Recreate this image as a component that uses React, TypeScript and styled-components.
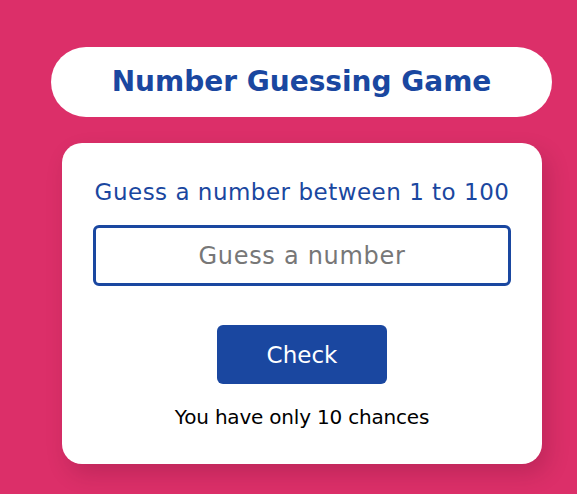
import React from "react";
import styled, { createGlobalStyle } from "styled-components";

const Global = createGlobalStyle`
  html, body { margin: 0; padding: 0; }
  body {
    background: #dc2f69;
    font-family: "DejaVu Sans", "Liberation Sans", sans-serif;
    width: 577px;
    height: 494px;
    overflow: hidden;
  }
`;

const Page = styled.div`
  display: flex;
  flex-direction: column;
  align-items: flex-start;
  padding: 47px 0 0 51px;
`;

const Header = styled.div`
  width: 501px;
  height: 70px;
  background: #fff;
  border-radius: 35px;
  display: flex;
  align-items: center;
  justify-content: center;
`;

const Title = styled.h1`
  margin: 0;
  font-size: 28px;
  font-weight: 700;
  color: #1a47a0;
  line-height: 34px;
`;

const Card = styled.div`
  margin: 26px 0 0 11px;
  width: 480px;
  height: 321px;
  box-sizing: border-box;
  background: #fff;
  border-radius: 20px;
  box-shadow: 6px 10px 22px rgba(60, 0, 30, 0.18);
  display: flex;
  flex-direction: column;
  align-items: center;
  padding-top: 33px;
`;

const Prompt = styled.p`
  margin: 0;
  font-size: 23px;
  letter-spacing: 0.5px;
  color: #1a47a0;
  line-height: 32px;
`;

const Input = styled.input`
  margin-top: 17px;
  width: 418px;
  height: 61px;
  box-sizing: border-box;
  padding: 0;
  border: 3px solid #1a47a0;
  border-radius: 6px;
  text-align: center;
  font-family: inherit;
  font-size: 24px;
  letter-spacing: 0.7px;
  color: #222;
  outline: none;
  -moz-appearance: textfield;
  &::placeholder { color: #777; }
  &::-webkit-inner-spin-button,
  &::-webkit-outer-spin-button {
    -webkit-appearance: none;
    margin: 0;
  }
`;

const Button = styled.button`
  margin-top: 39px;
  width: 170px;
  height: 59px;
  border: none;
  border-radius: 6px;
  background: #1a47a0;
  color: #fff;
  font-family: inherit;
  font-size: 23px;
  cursor: pointer;
`;

const Chances = styled.p`
  margin: 21px 0 0;
  font-size: 20px;
  letter-spacing: -0.2px;
  line-height: 24px;
  color: #000;
`;

export default function App() {
  return (
    <>
      <Global />
      <Page>
        <Header>
          <Title>Number Guessing Game</Title>
        </Header>
        <Card>
          <Prompt>Guess a number between 1 to 100</Prompt>
          <Input type="number" placeholder="Guess a number" />
          <Button>Check</Button>
          <Chances>You have only 10 chances</Chances>
        </Card>
      </Page>
    </>
  );
}
